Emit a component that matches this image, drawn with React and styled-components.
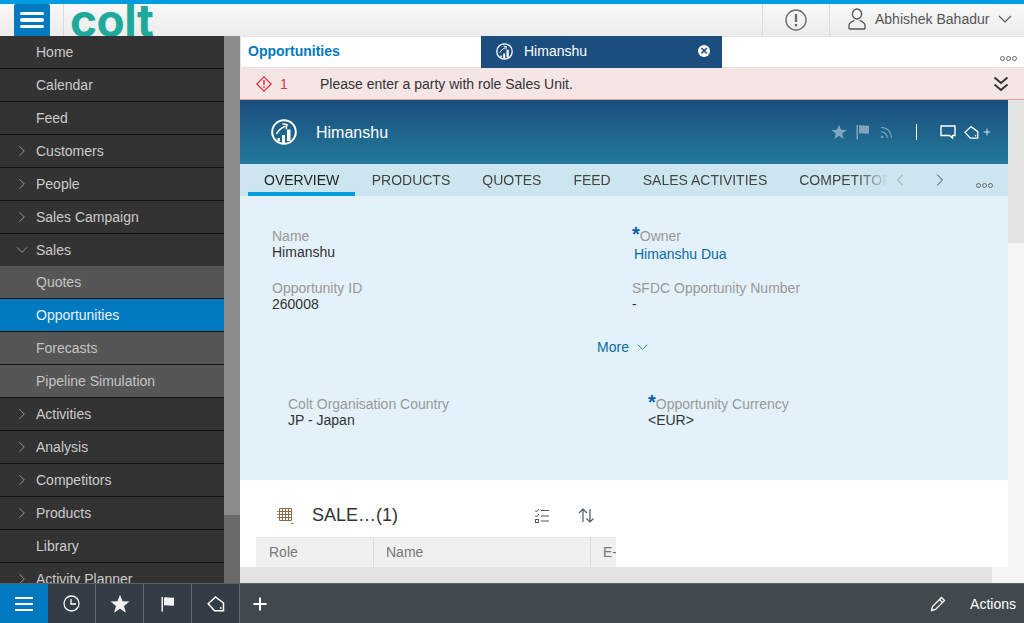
import React from 'react'
import styled, { createGlobalStyle } from 'styled-components'
import { ChevronDown, ChevronLeft, ChevronRight, Plus, Rss } from 'lucide-react'

const GlobalStyle = createGlobalStyle`
  html, body {
    margin: 0;
    padding: 0;
    height: 100%;
    overflow: hidden;
    font-family: "Liberation Sans", Arial, sans-serif;
    font-size: 14px;
  }
  * { box-sizing: border-box; }
`

const menuItems = [
  { label: 'Home' },
  { label: 'Calendar' },
  { label: 'Feed' },
  { label: 'Customers', arrow: 'right' },
  { label: 'People', arrow: 'right' },
  { label: 'Sales Campaign', arrow: 'right' },
  { label: 'Sales', arrow: 'down' },
  { label: 'Quotes', sub: true },
  { label: 'Opportunities', active: true },
  { label: 'Forecasts', sub: true },
  { label: 'Pipeline Simulation', sub: true },
  { label: 'Activities', arrow: 'right' },
  { label: 'Analysis', arrow: 'right' },
  { label: 'Competitors', arrow: 'right' },
  { label: 'Products', arrow: 'right' },
  { label: 'Library' },
  { label: 'Activity Planner', arrow: 'right' },
]

const objectTabs = ['OVERVIEW', 'PRODUCTS', 'QUOTES', 'FEED', 'SALES ACTIVITIES', 'COMPETITORS']

function OpportunityIcon({ size }) {
  return (
    <svg width={size} height={size} viewBox="0 0 26 26" fill="none" stroke="#fff">
      <circle cx="13" cy="13" r="11.8" strokeWidth="2" />
      <path d="M5.5 15c1.5-3 4.500-6 9-8" strokeWidth="1.5" />
      <path d="M11.500 4.800 16 5.600l-1 4.400" strokeWidth="1.5" />
      <path d="M6.500 19h2.500v3.500H6.500zM11 16h3v8h-3zM16 10.500h3.500V22H16z" fill="#fff" stroke="none" />
    </svg>
  )
}

function StarIcon({ size, color }) {
  return (
    <svg width={size} height={size} viewBox="0 0 20 20" fill={color}>
      <path d="M10 .8l2.500 6.500 7 .3-5.500 4.300 1.900 6.800L10 14.700l-5.900 4 1.900-6.800L.5 7.600l7-.3z" />
    </svg>
  )
}

function FlagIcon({ size, color }) {
  return (
    <svg width={size} height={size} viewBox="0 0 16 16" fill={color}>
      <rect x="1.500" y="1" width="1.500" height="14.500" />
      <path d="M4 1.500c3-.8 6 .8 10 0v8c-4 .8-7-.8-10 0z" />
    </svg>
  )
}

function TagIcon({ size }) {
  return (
    <svg width={size} height={size} viewBox="0 0 18 16" fill="none" stroke="#fff" strokeWidth="1.500">
      <path d="M8.500 1 1.200 7.800 7.500 14.800h9V7z" />
      <circle cx="13.800" cy="12" r="0.900" fill="#fff" stroke="none" />
    </svg>
  )
}

function CommentIcon() {
  return (
    <svg width="16" height="15" viewBox="0 0 16 15" fill="none" stroke="#fff" strokeWidth="1.400">
      <path d="M1 1h14v9.500h-2.500V13l-3-2.500H1z" />
    </svg>
  )
}

function ClockIcon() {
  return (
    <svg width="17" height="17" viewBox="0 0 17 17" fill="none" stroke="#fff" strokeWidth="1.300">
      <circle cx="8.500" cy="8.500" r="7.500" />
      <path d="M8 4v5h5" />
    </svg>
  )
}

function PencilIcon() {
  return (
    <svg width="16" height="16" viewBox="0 0 16 16" fill="none" stroke="#fff" strokeWidth="1.300">
      <path d="M1.500 14.500 2.500 10.500 11.500 1.500 14.500 4.500 5.500 13.500z" />
      <path d="M9.500 3.500l3 3" />
    </svg>
  )
}

function WarningIcon() {
  return (
    <svg width="16" height="16" viewBox="0 0 16 16" fill="none" stroke="#e5333c" strokeWidth="1.300">
      <path d="M8 .9 15.100 8 8 15.100.9 8z" />
      <path d="M8 4v5M8 10.400v1.600" strokeWidth="1.500" />
    </svg>
  )
}

function NoticeIcon() {
  return (
    <svg width="22" height="22" viewBox="0 0 22 22" fill="none" stroke="#6e6e6e" strokeWidth="1.400">
      <circle cx="11" cy="11" r="10" />
      <path d="M11 5v8" strokeWidth="2.400" />
      <path d="M11 15v2.400" strokeWidth="2.400" />
    </svg>
  )
}

function UserIcon() {
  return (
    <svg width="18" height="22" viewBox="0 0 18 22" fill="none" stroke="#555" strokeWidth="1.300">
      <ellipse cx="9" cy="6" rx="4.600" ry="5" />
      <path d="M1 21v-3.500c0-3 3-4 5.500-5M17 21v-3.500c0-3-3-4-5.500-5M1 21h16" />
    </svg>
  )
}

function WideChevron({ color, width = 14 }) {
  return (
    <svg width={width} height={width * 0.57} viewBox="0 0 14 8" fill="none" stroke={color} strokeWidth="1.100">
      <path d="M1 1l6 6 6-6" />
    </svg>
  )
}

function DoubleChevron() {
  return (
    <svg width="16" height="16" viewBox="0 0 16 16" fill="none" stroke="#333" strokeWidth="1.900">
      <path d="M1.500 1.500 8 7l6.500-5.500M1.500 8.500 8 14l6.500-5.500" />
    </svg>
  )
}

function TableIcon() {
  return (
    <svg width="19" height="19" viewBox="0 0 19 19" fill="none" stroke="#8a6a4a" strokeWidth="1">
      <path d="M3.500 2.500h12v12h-12zM3.500 5.500h12M3.500 8.500h12M3.500 11.500h12M6.500 2.500v12M9.500 2.500v12M12.500 2.500v12" />
      <path d="M1 5.500h2M1 8.500h2M1 11.500h2" stroke="#c08a4a" />
      <path d="M15.500 17l1 1 1-1" stroke="#555" />
    </svg>
  )
}

function ChecklistIcon() {
  return (
    <svg width="16" height="16" viewBox="0 0 16 16" fill="none" stroke="#555" strokeWidth="1">
      <path d="M1 2.500l1.500 1.500L5 1M1 7.500 2.500 9 5 6" />
      <rect x="1.500" y="11.500" width="3" height="3" />
      <path d="M7 2.500h8M7 8h8M7 13h8" />
    </svg>
  )
}

function SortIcon() {
  return (
    <svg width="19" height="17" viewBox="0 0 19 17" fill="none" stroke="#4a5a6a" strokeWidth="1.200">
      <path d="M6 15V2M2 6l4-4 4 4" />
      <path d="M13 2v13M9.500 11.500 13 15l3.500-3.500" />
    </svg>
  )
}

function Dots() {
  return (
    <DotRow>
      <i />
      <i />
      <i />
    </DotRow>
  )
}

export default function App() {
  return (
    <>
      <GlobalStyle />
      <Shell>
        <TopStrip />
        <Header>
          <MenuButton>
            <i />
            <i />
            <i />
          </MenuButton>
          <LogoCell>colt</LogoCell>
          <NoticeCell>
            <NoticeIcon />
          </NoticeCell>
          <UserCell>
            <UserIcon />
            <span>Abhishek Bahadur</span>
            <WideChevron color="#555" />
          </UserCell>
        </Header>

        <Body>
          <Sidebar>
            {menuItems.map((item) => (
              <MenuRow
                key={item.label}
                $sub={item.sub}
                $active={item.active}
                $open={item.arrow === 'down'}
              >
                <MenuArrow>
                  {item.arrow === 'right' && <ChevronRight size={18} strokeWidth={1.1} />}
                  {item.arrow === 'down' && <ChevronDown size={18} strokeWidth={1.1} />}
                </MenuArrow>
                {item.label}
              </MenuRow>
            ))}
          </Sidebar>
          <SideScroll>
            <SideThumb />
          </SideScroll>

          <Main>
            <TabBar>
              <PageTab>Opportunities</PageTab>
              <RecordTab>
                <OpportunityIcon size={17} />
                <RecordTabName>Himanshu</RecordTabName>
                <CloseDot>×</CloseDot>
              </RecordTab>
              <TabBarEnd>
                <Dots />
              </TabBarEnd>
            </TabBar>

            <AlertBar>
              <WarningIcon />
              <AlertCount>1</AlertCount>
              <AlertText>Please enter a party with role Sales Unit.</AlertText>
              <AlertToggle>
                <DoubleChevron />
              </AlertToggle>
            </AlertBar>

            <Workspace>
              <Scroller>
                <ObjectHeader>
                  <OpportunityIcon size={26} />
                  <ObjectTitle>Himanshu</ObjectTitle>
                  <HeaderTools>
                    <StarIcon size={16} color="#7fa6bd" />
                    <FlagIcon size={16} color="#7fa6bd" />
                    <Rss size={15} color="#7fa6bd" strokeWidth={1.9} />
                    <ToolDivider />
                    <CommentIcon />
                    <TagWithPlus>
                      <TagIcon size={15} />
                      <Plus size={10} strokeWidth={2} color="#fff" />
                    </TagWithPlus>
                  </HeaderTools>
                </ObjectHeader>

                <ObjectTabs>
                  <TabList>
                    {objectTabs.map((tab, i) => (
                      <ObjectTab key={tab} $active={i === 0}>
                        {tab}
                      </ObjectTab>
                    ))}
                  </TabList>
                  <TabArrow $muted>
                    <ChevronLeft size={20} strokeWidth={1.2} />
                  </TabArrow>
                  <TabArrow>
                    <ChevronRight size={20} strokeWidth={1.2} />
                  </TabArrow>
                  <TabDots>
                    <Dots />
                  </TabDots>
                </ObjectTabs>

                <Details>
                  <FieldGrid>
                    <Field>
                      <FieldLabel>Name</FieldLabel>
                      <FieldValue>Himanshu</FieldValue>
                    </Field>
                    <Field>
                      <FieldLabel>
                        <Required>*</Required>Owner
                      </FieldLabel>
                      <OwnerLink>Himanshu Dua</OwnerLink>
                    </Field>
                    <Field>
                      <FieldLabel>Opportunity ID</FieldLabel>
                      <FieldValue>260008</FieldValue>
                    </Field>
                    <Field>
                      <FieldLabel>SFDC Opportunity Number</FieldLabel>
                      <FieldValue>-</FieldValue>
                    </Field>
                  </FieldGrid>
                  <MoreRow>
                    More
                    <WideChevron color="#0a6aa8" width={11} />
                  </MoreRow>
                  <ExtraGrid>
                    <Field>
                      <FieldLabel>Colt Organisation Country</FieldLabel>
                      <FieldValue>JP - Japan</FieldValue>
                    </Field>
                    <Field>
                      <FieldLabel>
                        <Required>*</Required>Opportunity Currency
                      </FieldLabel>
                      <FieldValue>&lt;EUR&gt;</FieldValue>
                    </Field>
                  </ExtraGrid>
                </Details>

                <Section>
                  <SectionBar>
                    <TableIcon />
                    <SectionTitle>SALE…(1)</SectionTitle>
                    <SectionTools>
                      <ChecklistIcon />
                      <SortIcon />
                    </SectionTools>
                  </SectionBar>
                  <TableHead>
                    <HeadCell>Role</HeadCell>
                    <HeadCell>Name</HeadCell>
                    <HeadCell>E-Mail</HeadCell>
                  </TableHead>
                </Section>

                <BottomScroll>
                  <BottomThumb />
                </BottomScroll>
              </Scroller>
              <RightScroll>
                <RightThumb />
              </RightScroll>
            </Workspace>
          </Main>
        </Body>

        <Footer>
          <FooterMenu>
            <i />
            <i />
            <i />
          </FooterMenu>
          <FooterCell>
            <ClockIcon />
          </FooterCell>
          <FooterCell>
            <StarIcon size={20} color="#f2f2f2" />
          </FooterCell>
          <FooterCell>
            <FlagIcon size={16} color="#f2f2f2" />
          </FooterCell>
          <FooterCell>
            <TagIcon size={18} />
          </FooterCell>
          <FooterAdd>
            <Plus size={20} strokeWidth={2.4} color="#fff" />
          </FooterAdd>
          <FooterActions>
            <PencilIcon />
            <span>Actions</span>
          </FooterActions>
        </Footer>
      </Shell>
    </>
  )
}

const Shell = styled.div`
  display: flex;
  flex-direction: column;
  width: 1024px;
  height: 623px;
  overflow: hidden;
  background: #fff;
`

const TopStrip = styled.div`
  height: 4px;
  background: #009de0;
`

const Header = styled.header`
  display: flex;
  align-items: stretch;
  height: 32px;
  padding-left: 14px;
  background: linear-gradient(#f8f8f8, #ececec);
`

const MenuButton = styled.div`
  display: flex;
  flex-direction: column;
  justify-content: center;
  gap: 3px;
  width: 36px;
  padding: 0 6px;
  background: #0079c1;
  border-radius: 2px 2px 0 0;
  i {
    height: 3.5px;
    background: #fff;
    border-radius: 2px;
  }
`

const LogoCell = styled.div`
  margin-left: 13px;
  padding-left: 6px;
  width: 699px;
  height: 32px;
  overflow: hidden;
  border-left: 1px solid #dcdcdc;
  color: #1fa99a;
  font-family: Inter, sans-serif;
  font-weight: 700;
  font-size: 46px;
  letter-spacing: -0.5px;
  line-height: 32px;
`

const NoticeCell = styled.div`
  display: flex;
  align-items: center;
  justify-content: center;
  width: 68px;
  padding-bottom: 1px;
  border-left: 1px solid #dcdcdc;
  border-right: 1px solid #dcdcdc;
`

const UserCell = styled.div`
  display: flex;
  align-items: center;
  gap: 9px;
  padding: 0 0 2px 18px;
  color: #555;
  font-size: 14px;
`

const Body = styled.div`
  display: flex;
  flex: 1;
  min-height: 0;
`

const Sidebar = styled.nav`
  width: 224px;
  flex: none;
  overflow: hidden;
  background: #333;
`

const MenuRow = styled.div`
  display: flex;
  align-items: center;
  height: ${(p) => (p.$open ? '32px' : '33px')};
  padding-left: 14px;
  border-bottom: ${(p) => (p.$open ? '0' : '1px solid #111')};
  color: ${(p) => (p.$active ? '#e8f2f8' : p.$sub ? '#c4c4c4' : '#cccccc')};
  background: ${(p) => (p.$active ? '#0079c1' : p.$sub ? '#565656' : '#333')};
  font-size: 14px;
`

const MenuArrow = styled.span`
  display: flex;
  width: 23px;
  margin-left: -1px;
  color: #aaa;
`

const SideScroll = styled.div`
  width: 16px;
  flex: none;
  background: #6a6a6a;
`

const SideThumb = styled.div`
  height: 479px;
  background: #8c8c8c;
`

const Main = styled.main`
  display: flex;
  flex-direction: column;
  flex: 1;
  min-width: 0;
`

const TabBar = styled.div`
  display: flex;
  height: 32px;
  border-top: 1px solid #e2e2e2;
  border-bottom: 1px solid #e2e2e2;
  background: #fff;
`

const PageTab = styled.div`
  display: flex;
  align-items: center;
  width: 241px;
  padding: 0 0 2px 7px;
  color: #0079c1;
  font-weight: bold;
  font-size: 14px;
  border-left: 1px solid #e2e2e2;
`

const RecordTab = styled.div`
  display: flex;
  align-items: center;
  width: 241px;
  margin: -1px 0;
  padding: 0 12px 2px 15px;
  background: #1b4d7e;
  color: #fff;
  font-size: 14px;
`

const RecordTabName = styled.span`
  flex: 1;
  margin-left: 11px;
`

const CloseDot = styled.span`
  display: flex;
  align-items: center;
  justify-content: center;
  width: 12px;
  height: 12px;
  border-radius: 50%;
  background: #fff;
  color: #1b4d7e;
  font-size: 13px;
  font-weight: bold;
  line-height: 12px;
`

const TabBarEnd = styled.div`
  display: flex;
  flex: 1;
  align-items: flex-end;
  justify-content: flex-end;
  padding: 0 7px 6px 0;
`

const DotRow = styled.span`
  display: inline-flex;
  gap: 1px;
  i {
    width: 5px;
    height: 5px;
    border: 1px solid #666;
    border-radius: 50%;
  }
`

const AlertBar = styled.div`
  display: flex;
  align-items: center;
  height: 32px;
  padding-left: 16px;
  background: #f5e5e5;
  border-bottom: 1px solid #e8a0a0;
  font-size: 14px;
`

const AlertCount = styled.span`
  width: 40px;
  margin-left: 8px;
  color: #e5333c;
`

const AlertText = styled.span`
  flex: 1;
  color: #333;
`

const AlertToggle = styled.span`
  display: flex;
  margin-right: 15px;
`

const Workspace = styled.div`
  display: flex;
  flex: 1;
  min-height: 0;
`

const Scroller = styled.div`
  display: flex;
  flex-direction: column;
  flex: 1;
  min-width: 0;
`

const ObjectHeader = styled.div`
  display: flex;
  align-items: center;
  height: 64px;
  padding: 0 16px 0 31px;
  background: linear-gradient(#1b4d7e, #237a9a);
`

const ObjectTitle = styled.div`
  flex: 1;
  margin: 2px 0 0 19px;
  color: #fff;
  font-size: 16px;
`

const HeaderTools = styled.div`
  display: flex;
  align-items: center;
  gap: 8px;
`

const ToolDivider = styled.span`
  width: 1px;
  height: 16px;
  margin: 0 15px 0 14px;
  background: #fff;
`

const TagWithPlus = styled.span`
  display: flex;
  align-items: center;
  gap: 3px;
`

const ObjectTabs = styled.div`
  display: flex;
  align-items: center;
  height: 32px;
  padding-left: 8px;
  background: #cce5ee;
`

const TabList = styled.div`
  display: flex;
  width: 640px;
  height: 100%;
  overflow: hidden;
  flex: none;
  -webkit-mask-image: linear-gradient(to right, #000 610px, transparent 640px);
  mask-image: linear-gradient(to right, #000 610px, transparent 640px);
`

const ObjectTab = styled.div`
  display: flex;
  align-items: center;
  flex: none;
  height: 100%;
  padding: 4px 16px 0;
  margin-right: ${(p) => (p.$active ? '0.5px' : '0')};
  color: ${(p) => (p.$active ? '#222' : '#444')};
  border-bottom: 4px solid ${(p) => (p.$active ? '#009de0' : 'transparent')};
  font-size: 14px;
`

const TabArrow = styled.span`
  display: flex;
  width: 40px;
  padding-left: 2px;
  color: ${(p) => (p.$muted ? '#999' : '#445')};
`

const TabDots = styled.span`
  display: flex;
  margin-left: 8px;
  padding-top: 10px;
`

const Details = styled.section`
  height: 284px;
  padding-top: 32px;
  background: #e3f1fa;
`

const FieldGrid = styled.div`
  display: grid;
  grid-template-columns: 360px 1fr;
  row-gap: 20px;
  padding-left: 32px;
`

const ExtraGrid = styled(FieldGrid)`
  margin-top: 41px;
  padding-left: 48px;
`

const Field = styled.div`
  height: 32px;
  line-height: 16px;
`

const FieldLabel = styled.div`
  color: #999;
  font-size: 14px;
`

const Required = styled.span`
  color: #0a5ea8;
  font-weight: bold;
  font-size: 20px;
  line-height: 0;
`

const FieldValue = styled.div`
  color: #333;
  font-size: 14px;
`

const OwnerLink = styled(FieldValue)`
  margin: 2px 0 0 2px;
  color: #0a6aa8;
`

const MoreRow = styled.div`
  display: flex;
  align-items: center;
  justify-content: center;
  gap: 8px;
  height: 16px;
  margin-top: 27px;
  padding-right: 3px;
  color: #0a6aa8;
  font-size: 14px;
`

const Section = styled.section`
  flex: 1;
  min-height: 0;
  padding-left: 16px;
  background: #fff;
`

const SectionBar = styled.div`
  display: flex;
  align-items: center;
  width: 360px;
  height: 43px;
  margin-top: 14px;
  padding: 0 20px;
`

const SectionTitle = styled.div`
  margin: -1px 0 0 17px;
  color: #333;
  font-size: 18px;
`

const SectionTools = styled.div`
  display: flex;
  align-items: center;
  gap: 27px;
  margin-left: auto;
`

const TableHead = styled.div`
  display: grid;
  grid-template-columns: 118px 217px 25px;
  width: 360px;
  height: 30px;
  background: #f0f0f0;
  border-top: 1px solid #e4e4e4;
`

const HeadCell = styled.div`
  display: flex;
  align-items: center;
  overflow: hidden;
  white-space: nowrap;
  padding: 0 0 2px 12px;
  color: #777;
  font-size: 14px;
  border-right: 1px solid #dcdcdc;
  &:first-child {
    padding-left: 13px;
  }
  &:last-child {
    border-right: 0;
  }
`

const BottomScroll = styled.div`
  flex: none;
  height: 16px;
  background: #f5f5f5;
`

const BottomThumb = styled.div`
  width: 752px;
  height: 100%;
  background: #e3e3e3;
`

const RightScroll = styled.div`
  width: 16px;
  flex: none;
  background: #f5f5f5;
`

const RightThumb = styled.div`
  height: 143px;
  background: #e4e4e4;
`

const Footer = styled.footer`
  display: flex;
  align-items: stretch;
  height: 40px;
  background: #40494d;
  border-top: 1px solid #5b6468;
`

const FooterMenu = styled.div`
  display: flex;
  flex-direction: column;
  justify-content: center;
  gap: 4px;
  width: 48px;
  padding: 0 15px;
  background: #0079c1;
  i {
    height: 2px;
    background: #fff;
  }
`

const FooterCell = styled.div`
  display: flex;
  align-items: center;
  justify-content: center;
  width: 48px;
  background: #333d46;
  border-right: 1px solid #666d72;
`

const FooterAdd = styled.div`
  display: flex;
  align-items: center;
  padding-left: 10px;
`

const FooterActions = styled.div`
  display: flex;
  align-items: center;
  gap: 24px;
  margin-left: auto;
  padding-right: 8px;
  color: #fff;
  font-size: 14px;
`
